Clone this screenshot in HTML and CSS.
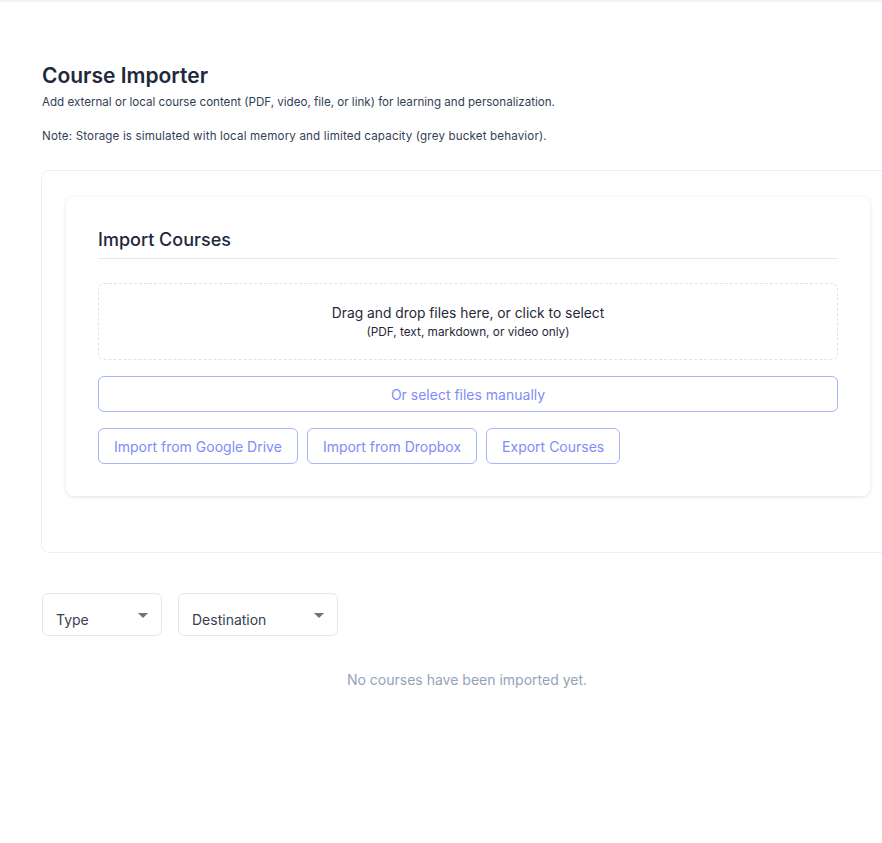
FILE: index.html
```html
<!DOCTYPE html>
<html lang="en">

<head>
    <meta charset="UTF-8">
    <meta name="viewport" content="width=device-width, initial-scale=1.0">
    <title>Course Importer</title>
    <link rel="stylesheet" href="styles.css">
</head>

<body>
    <div class="topbar"></div>
    <main class="page">
        <h1>Course Importer</h1>
        <p class="lead">Add external or local course content (PDF, video, file, or link) for learning and personalization.</p>
        <p class="note">Note: Storage is simulated with local memory and limited capacity (grey bucket behavior).</p>

        <section class="panel">
            <div class="card">
                <h2>Import Courses</h2>
                <div class="dropzone">
                    <p class="drop-title">Drag and drop files here, or click to select</p>
                    <p class="drop-hint">(PDF, text, markdown, or video only)</p>
                </div>
                <button type="button" class="btn btn-wide">Or select files manually</button>
                <div class="btn-row">
                    <button type="button" class="btn">Import from Google Drive</button>
                    <button type="button" class="btn">Import from Dropbox</button>
                    <button type="button" class="btn">Export Courses</button>
                </div>
            </div>
        </section>

        <div class="filters">
            <div class="select select-type">
                <span>Type</span>
                <span class="caret"></span>
            </div>
            <div class="select select-dest">
                <span>Destination</span>
                <span class="caret"></span>
            </div>
        </div>

        <p class="empty">No courses have been imported yet.</p>
    </main>
</body>

</html>
```

FILE: styles.css
```css
* {
    margin: 0;
    padding: 0;
    box-sizing: border-box;
}

html,
body {
    overflow-x: hidden;
}

body {
    font-family: Inter, "Noto Sans", sans-serif;
    background-color: #fff;
    color: #1f2937;
}

.topbar {
    height: 2px;
    background-color: #f3f4f6;
}

.page {
    width: 850px;
    margin-left: 42px;
    padding-top: 60px;
}

h1 {
    font-size: 21px;
    font-weight: 600;
    line-height: 28px;
    color: #1e293b;
}

.lead,
.note {
    font-size: 11.6px;
    line-height: 16px;
    color: #334155;
}

.lead {
    margin-top: 4px;
}

.note {
    margin-top: 18px;
    letter-spacing: 0.15px;
}

/* Outer panel */
.panel {
    margin-top: 26px;
    margin-left: -1px;
    width: 853px;
    border: 1px solid #eceff3;
    border-radius: 8px;
    padding: 26px 23px 56px 24px;
}

.card {
    background-color: #fff;
    border-radius: 8px;
    box-shadow: 0 1px 4px rgba(0, 0, 0, 0.12);
    padding: 30px 32px 32px;
}

h2 {
    font-size: 18px;
    font-weight: 500;
    line-height: 26px;
    color: #1e293b;
    padding-bottom: 5px;
    border-bottom: 1px solid #e2e8f0;
}

.dropzone {
    margin-top: 24px;
    height: 77px;
    border: 1px dashed #dfe3e8;
    border-radius: 6px;
    display: flex;
    flex-direction: column;
    align-items: center;
    justify-content: center;
}

.drop-title {
    font-size: 13.8px;
    line-height: 20px;
    color: #1f2937;
}

.drop-hint {
    font-size: 11.8px;
    line-height: 18px;
    color: #1f2937;
}

.btn {
    font-family: inherit;
    font-size: 14px;
    color: #818cf8;
    background-color: #fff;
    border: 1px solid #a5b4fc;
    border-radius: 6px;
    height: 36px;
    padding: 0 15px;
    cursor: pointer;
}

.btn-wide {
    display: block;
    width: 100%;
    margin-top: 16px;
}

.btn-row {
    display: flex;
    gap: 9px;
    margin-top: 16px;
}

/* Filters */
.filters {
    display: flex;
    gap: 17px;
    margin-top: 40px;
}

.select {
    height: 43px;
    border: 1px solid #e2e8f0;
    border-radius: 6px;
    display: flex;
    justify-content: space-between;
    align-items: flex-start;
    padding: 17px 13px 0;
    font-size: 14px;
    color: #374151;
}

.select-type {
    width: 120px;
}

.select-dest {
    width: 160px;
    margin-left: -1px;
}

.caret {
    margin-top: 2px;
    width: 0;
    height: 0;
    border-left: 5px solid transparent;
    border-right: 5px solid transparent;
    border-top: 5px solid #6b7280;
}

.empty {
    margin-top: 35px;
    text-align: center;
    font-size: 14px;
    color: #94a3b8;
}
```
